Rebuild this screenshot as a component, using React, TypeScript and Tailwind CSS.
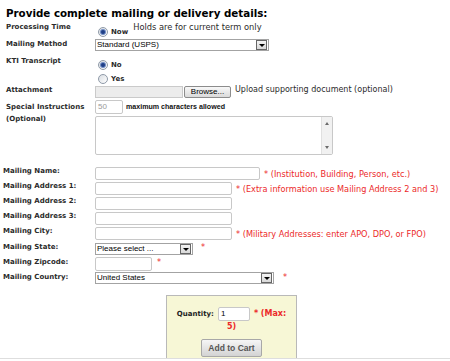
import React from 'react'

const Radio = ({ checked }: { checked?: boolean }) => (
  <span className="flex h-[10px] w-[10px] shrink-0 items-center justify-center rounded-full border border-[#8f9aa8] bg-gradient-to-br from-[#d9dde2] to-white">
    {checked && <span className="h-[4px] w-[4px] rounded-full bg-[#1f3f86] shadow-[0_0_0_1px_#6f8cc4]" />}
  </span>
)

const Arrow = () => (
  <span className="my-auto ml-auto mr-[1px] flex h-[10px] w-[11px] shrink-0 items-center justify-center border border-[#666] bg-gradient-to-b from-[#f4f4f4] to-[#d8d8d8]">
    <span className="h-0 w-0 border-x-[3px] border-t-[3px] border-x-transparent border-t-black" />
  </span>
)

const Select = ({ text, className }: { text: string; className: string }) => (
  <div className={`flex border border-[#a3a3a3] bg-white ${className}`}>
    <span className="pl-[1px] font-['Liberation_Sans',sans-serif] text-[8px] leading-[10px] text-black">{text}</span>
    <Arrow />
  </div>
)

const Box = ({ className }: { className: string }) => (
  <div className={`rounded-[2px] border border-[#c8c8c8] bg-white ${className}`} />
)

const Label = ({ children, className = '' }: { children: React.ReactNode; className?: string }) => (
  <div className={`shrink-0 text-[7px] font-bold leading-[12px] text-[#2b2b2b] ${className}`}>{children}</div>
)

const Hint = ({ children, className = '' }: { children: React.ReactNode; className?: string }) => (
  <span className={`whitespace-nowrap text-[8.2px] leading-[12px] text-[#ec2a2a] ${className}`}>{children}</span>
)

export default function App() {
  return (
    <div className="h-[361px] w-[450px] overflow-hidden bg-white font-['DejaVu_Sans',sans-serif] text-[#2b2b2b]">
      <h2 className="ml-[6px] pt-[6px] text-[10.3px] font-bold leading-[15px] text-black">
        Provide complete mailing or delivery details:
      </h2>

      {/* Top section */}
      <div className="pl-[6px]">
        <div className="flex h-[16px]">
          <Label className="w-[89px]">Processing Time</Label>
          <div className="ml-[3px] mt-[6px] flex h-[10px] items-center gap-[3px]">
            <Radio checked />
            <span className="text-[7px] font-bold">Now</span>
          </div>
          <span className="ml-[5px] text-[8.3px] leading-[12px]">Holds are for current term only</span>
        </div>

        <div className="flex h-[15px]">
          <Label className="mt-[1px] w-[89px]">Mailing Method</Label>
          <Select text="Standard (USPS)" className="mt-[2px] h-[12px] w-[174px]" />
        </div>

        <div className="flex h-[32px]">
          <Label className="mt-[3px] w-[89px]">KTI Transcript</Label>
          <div className="ml-[3px] flex flex-col">
            <div className="mt-[8px] flex h-[10px] items-center gap-[3px]">
              <Radio checked />
              <span className="text-[7px] font-bold">No</span>
            </div>
            <div className="mt-[4px] flex h-[10px] items-center gap-[3px]">
              <Radio />
              <span className="text-[7px] font-bold">Yes</span>
            </div>
          </div>
        </div>

        <div className="flex h-[15px]">
          <Label className="w-[89px]">Attachment</Label>
          <div className="mt-[2px] h-[12px] w-[88px] border border-[#cacaca] bg-[#ececec]" />
          <div className="ml-[1px] mt-[2px] flex h-[12px] w-[47px] items-center justify-center rounded-[2px] border border-[#8c8c8c] bg-gradient-to-b from-[#f8f8f8] to-[#dadada] font-['Liberation_Sans',sans-serif] text-[8px] text-black">
            Browse...
          </div>
          <span className="ml-[4px] text-[8px] leading-[12px]">Upload supporting document (optional)</span>
        </div>

        <div className="flex">
          <Label className="w-[89px] pt-[2px] leading-[11px]">
            Special Instructions
            <br />
            (Optional)
          </Label>
          <div className="flex flex-col">
            <div className="mt-[1px] flex items-center">
              <div className="flex h-[14px] w-[28px] items-center rounded-[2px] border border-[#c8c8c8] bg-white pl-[2px] font-['Liberation_Sans',sans-serif] text-[8px] text-[#9a9a9a]">
                50
              </div>
              <span className="ml-[3px] font-['Liberation_Sans',sans-serif] text-[7.1px] font-bold text-[#111]">
                maximum characters allowed
              </span>
            </div>
            <div className="mt-[2px] flex h-[39px] w-[238px] rounded-[2px] border border-[#c8c8c8] bg-white">
              <div className="ml-auto flex w-[11px] flex-col items-center justify-between border-l border-[#e0e0e0] bg-[#f1f1f1] py-[5px]">
                <span className="h-0 w-0 border-x-[2.5px] border-b-[3px] border-x-transparent border-b-[#6b6b6b]" />
                <span className="h-0 w-0 border-x-[2.5px] border-t-[3px] border-x-transparent border-t-[#6b6b6b]" />
              </div>
            </div>
          </div>
        </div>
      </div>

      {/* Mailing address */}
      <div className="mt-[10px] pl-[3px]">
        <div className="flex h-[15px]">
          <Label className="w-[92px]">Mailing Name:</Label>
          <Box className="mt-[2px] h-[13px] w-[165px]" />
          <Hint className="ml-[4px] mt-[3px]">* (Institution, Building, Person, etc.)</Hint>
        </div>
        <div className="flex h-[15px]">
          <Label className="w-[92px]">Mailing Address 1:</Label>
          <Box className="mt-[2px] h-[13px] w-[137px]" />
          <Hint className="ml-[4px] mt-[3px]">* (Extra information use Mailing Address 2 and 3)</Hint>
        </div>
        <div className="flex h-[15px]">
          <Label className="w-[92px]">Mailing Address 2:</Label>
          <Box className="mt-[2px] h-[13px] w-[137px]" />
        </div>
        <div className="flex h-[15px]">
          <Label className="w-[92px]">Mailing Address 3:</Label>
          <Box className="mt-[2px] h-[13px] w-[137px]" />
        </div>
        <div className="flex h-[16px]">
          <Label className="w-[92px]">Mailing City:</Label>
          <Box className="mt-[2px] h-[13px] w-[137px]" />
          <Hint className="ml-[4px] mt-[3px]">* (Military Addresses: enter APO, DPO, or FPO)</Hint>
        </div>
        <div className="flex h-[15px]">
          <Label className="w-[92px]">Mailing State:</Label>
          <Select text="Please select ..." className="mt-[2px] h-[12px] w-[98px]" />
          <Hint className="ml-[8px]">*</Hint>
        </div>
        <div className="flex h-[15px]">
          <Label className="w-[92px]">Mailing Zipcode:</Label>
          <Box className="mt-[1px] h-[14px] w-[57px]" />
          <Hint className="ml-[5px]">*</Hint>
        </div>
        <div className="flex h-[15px]">
          <Label className="w-[92px]">Mailing Country:</Label>
          <Select text="United States" className="mt-[1px] h-[12px] w-[179px]" />
          <Hint className="ml-[9px]">*</Hint>
        </div>
      </div>

      {/* Quantity */}
      <div className="ml-[166px] mt-[9px] h-[63px] w-[131px] border border-b-0 border-[#b9b9b9] bg-[#f7f7d6] pt-[11px]">
        <div className="flex h-[14px] items-center justify-center">
          <span className="text-[7px] font-bold text-[#222]">Quantity:</span>
          <div className="ml-[4px] flex h-[14px] w-[32px] items-center rounded-[2px] border border-[#c8c8c8] bg-white pl-[2px] font-['Liberation_Sans',sans-serif] text-[8px] text-black">
            1
          </div>
          <span className="ml-[4px] text-[8px] font-bold text-[#ec2a2a]">* (Max:</span>
        </div>
        <div className="text-center text-[8px] font-bold leading-[12px] text-[#ec2a2a]">5)</div>
        <div className="mx-auto mt-[6px] flex h-[18px] w-[61px] items-center justify-center rounded-[2px] border border-[#a8a8a8] bg-gradient-to-b from-[#f6f6f6] to-[#d3d3d3] font-['Liberation_Sans',sans-serif] text-[8.5px] font-bold text-[#555]">
          Add to Cart
        </div>
      </div>
      <div className="h-[1px] w-full bg-[#dedede]" />
    </div>
  )
}
